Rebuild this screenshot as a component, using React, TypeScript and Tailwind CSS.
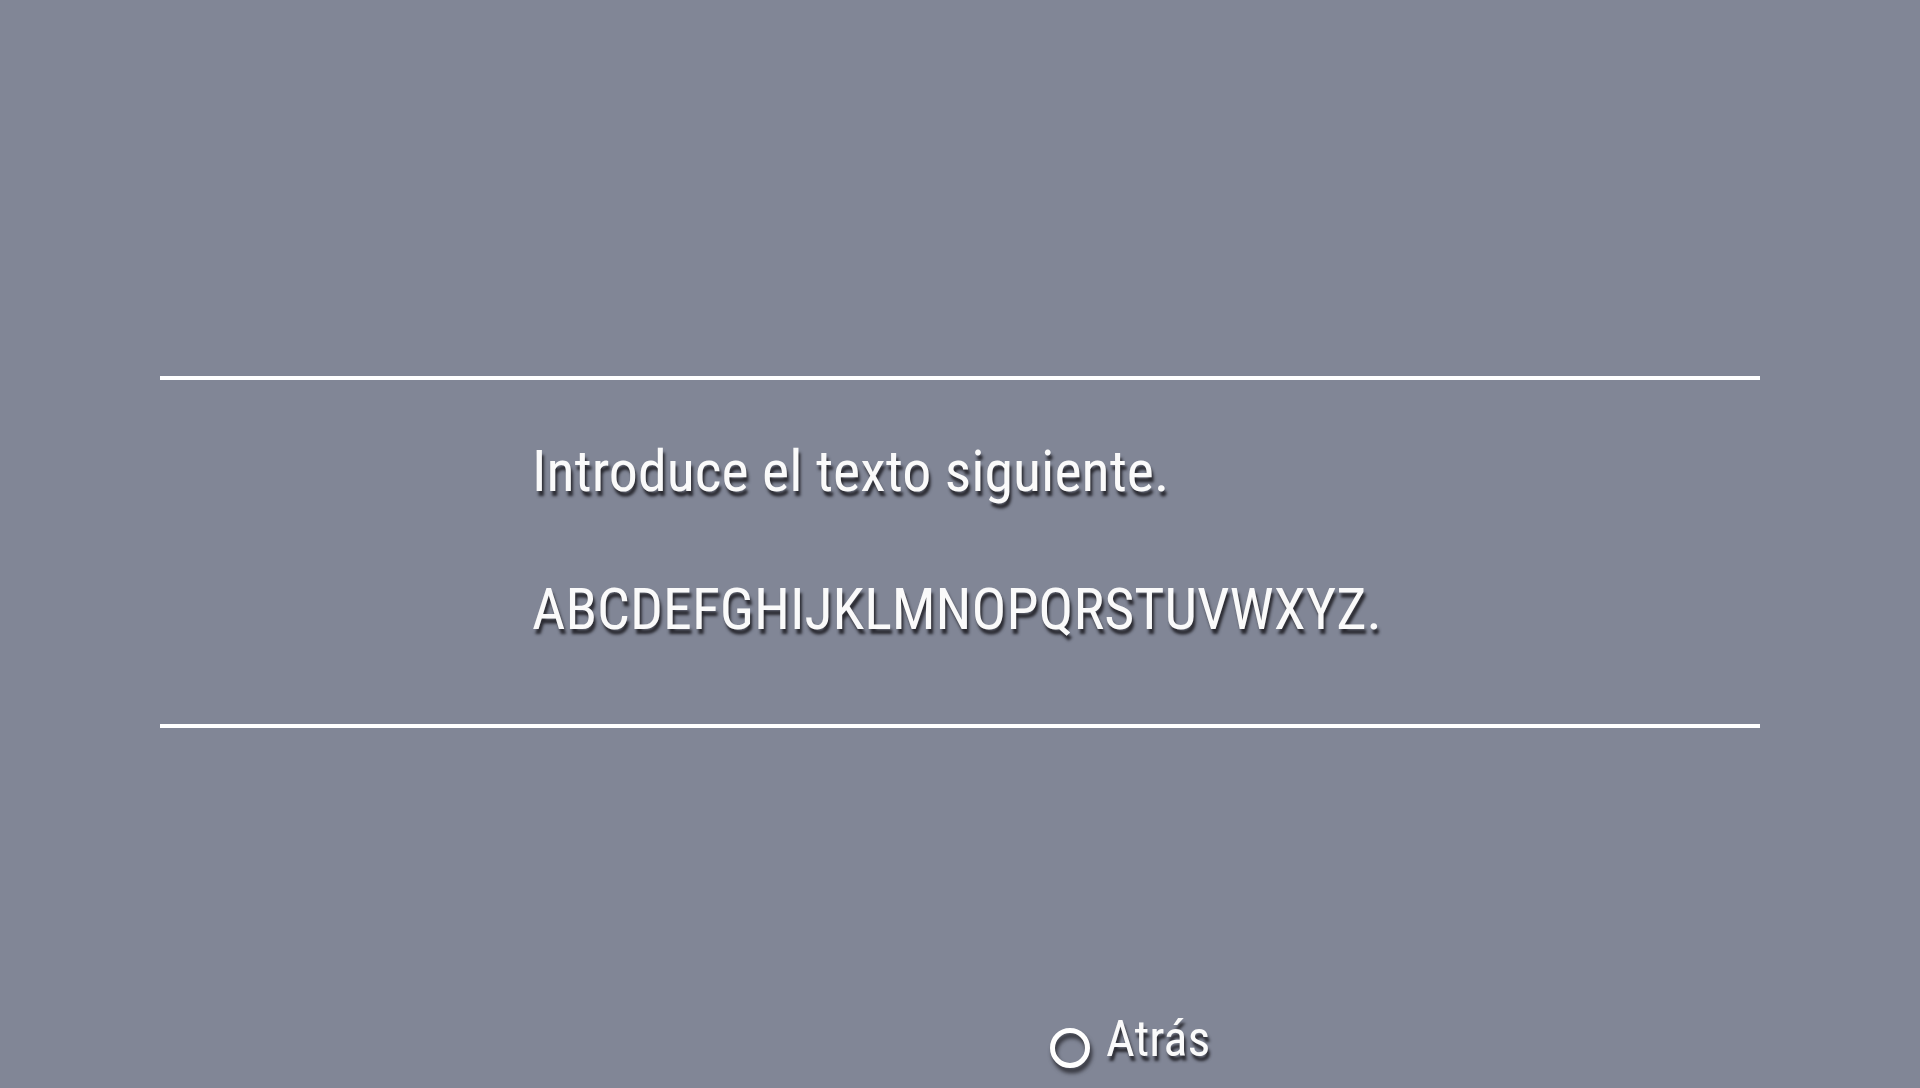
const textShadow = "[text-shadow:2px_5px_3px_rgba(36,36,42,0.95)]";

export default function App() {
  return (
    <div className="flex min-h-screen flex-col bg-[#818696] px-40 font-['Roboto_Condensed','Roboto',sans-serif] text-[#fafafa]">
      {/* Mensaje */}
      <main className={`mt-94 border-y-4 border-white px-93 pt-14 pb-20 text-[58px] leading-[70px] ${textShadow}`}>
        <p>Introduce el texto siguiente.</p>
        <p className="mt-17">ABCDEFGHIJKLMNOPQRSTUVWXYZ.</p>
      </main>

      {/* Volver */}
      <footer className="flex flex-1 items-end pb-5 pl-[890px]">
        <button type="button" className={`flex cursor-pointer items-end gap-4 text-[50px] leading-[58px] ${textShadow}`}>
          <span className="size-10 rounded-full border-5 border-white drop-shadow-[2px_5px_2px_rgba(36,36,42,0.9)]" />
          Atrás
        </button>
      </footer>
    </div>
  );
}
